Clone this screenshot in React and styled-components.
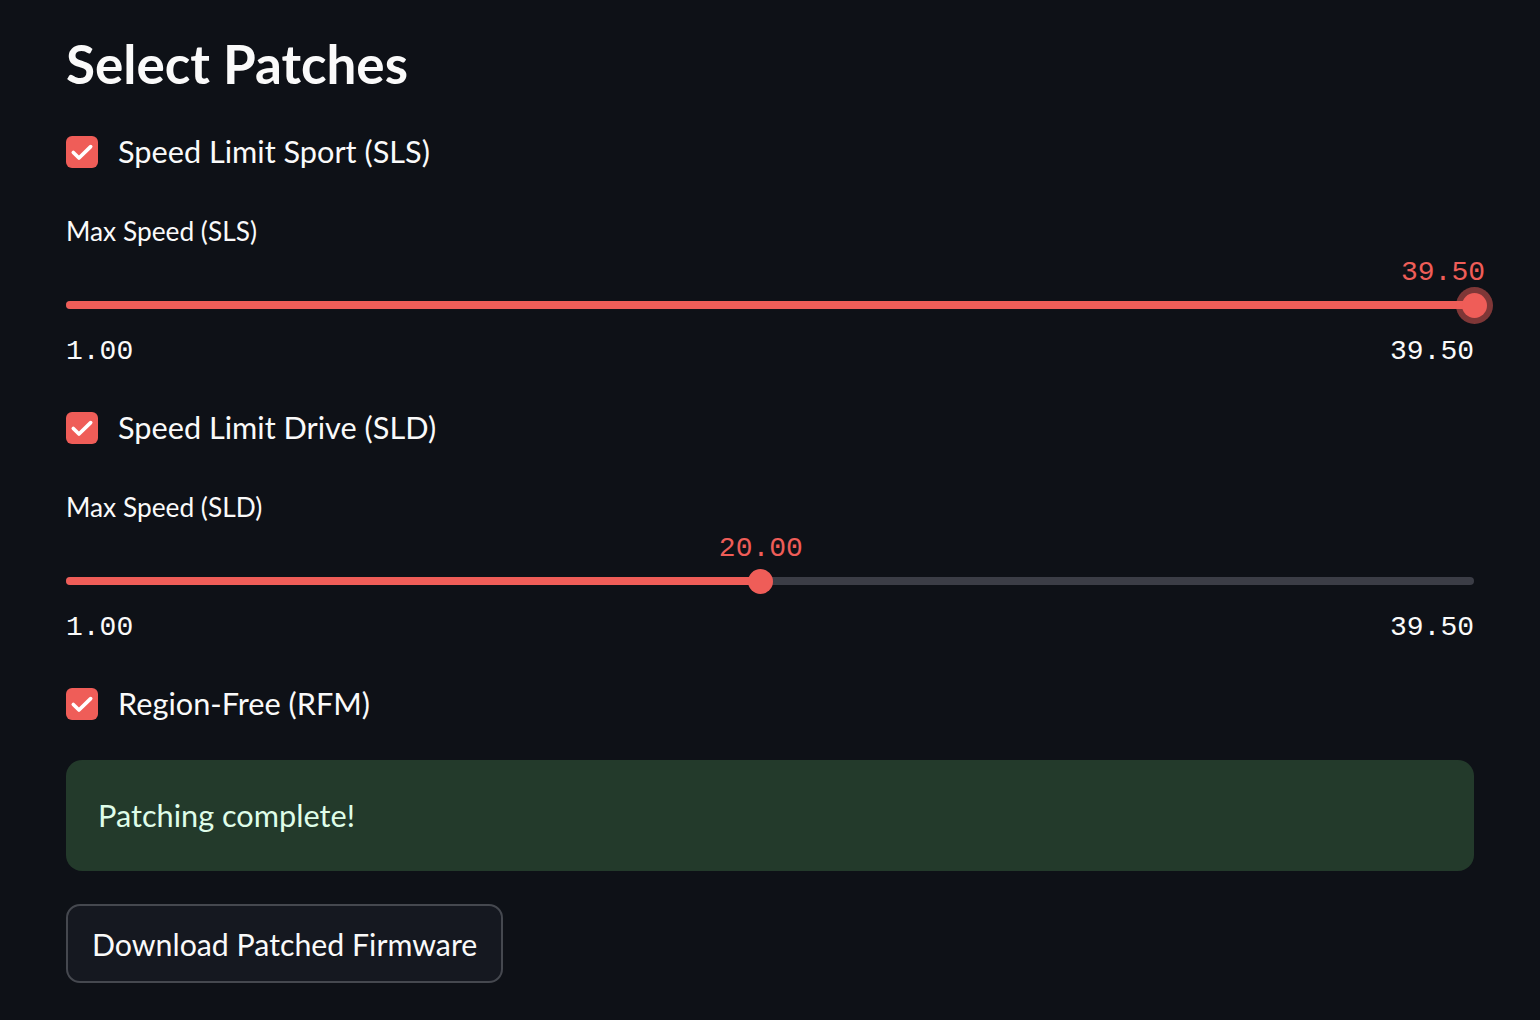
import React from 'react';
import styled, { createGlobalStyle } from 'styled-components';

const primary = '#ef5d58';
const text = '#fafafa';

const GlobalStyle = createGlobalStyle`
  html, body {
    margin: 0;
    padding: 0;
    background: #0e1117;
  }
  body {
    font-family: Lato, "Noto Sans", sans-serif;
    color: ${text};
  }
`;

const Page = styled.main`
  width: 1408px;
  padding: 30px 0 37px 66px;
  display: flex;
  flex-direction: column;
`;

const Heading = styled.h2`
  margin: 0;
  height: 67px;
  line-height: 67px;
  font-size: 53px;
  font-weight: 700;
  color: ${text};
`;

const CheckRow = styled.label`
  display: flex;
  align-items: center;
  gap: 20px;
  height: 40px;
  margin-top: ${({ $gap }) => $gap}px;
  font-size: 30.7px;
  line-height: 38px;
  color: ${text};
`;

const Box = styled.span`
  width: 32px;
  height: 32px;
  border-radius: 6px;
  background: ${primary};
  display: flex;
  align-items: center;
  justify-content: center;
`;

const SliderWrap = styled.div`
  margin-top: 41px;
  display: flex;
  flex-direction: column;
`;

const SliderLabel = styled.div`
  height: 36px;
  line-height: 36px;
  font-size: 26.3px;
  color: ${text};
`;

const TrackArea = styled.div`
  margin-top: 36px;
  height: 40px;
  position: relative;
  display: flex;
  align-items: center;
`;

const Track = styled.div`
  position: relative;
  width: 100%;
  height: 8px;
  border-radius: 4px;
  background: #3b3d46;
`;

const Fill = styled.div`
  height: 100%;
  border-radius: 4px;
  background: ${primary};
`;

const Thumb = styled.div`
  position: absolute;
  top: 50%;
  width: 25px;
  height: 25px;
  margin: -12.5px 0 0 -12.5px;
  border-radius: 50%;
  background: ${primary};
  box-shadow: ${({ $focus }) => ($focus ? '0 0 0 6px rgba(239, 93, 88, 0.5)' : 'none')};
`;

const ValueLabel = styled.div`
  position: absolute;
  top: -43px;
  height: 30px;
  line-height: 30px;
  font-family: "Liberation Mono", "DejaVu Sans Mono", monospace;
  font-size: 28px;
  color: ${primary};
  white-space: nowrap;
`;

const Ticks = styled.div`
  margin-top: 9px;
  height: 36px;
  line-height: 36px;
  display: flex;
  justify-content: space-between;
  font-family: "Liberation Mono", "DejaVu Sans Mono", monospace;
  font-size: 28px;
  color: ${text};
`;

const Alert = styled.div`
  margin-top: 36px;
  height: 111px;
  box-sizing: border-box;
  padding: 0 32px;
  display: flex;
  align-items: center;
  border-radius: 16px;
  background: #233a2b;
  color: #dffde9;
  font-size: 30.7px;
`;

const Button = styled.button`
  margin-top: 33px;
  align-self: flex-start;
  height: 79px;
  padding: 0 24px;
  border: 2px solid #45484f;
  border-radius: 14px;
  background: #151820;
  color: ${text};
  font-family: Lato, "Noto Sans", sans-serif;
  font-size: 30.3px;
`;

const Check = ({ label, gap }) => (
  <CheckRow $gap={gap}>
    <Box>
      <svg width="26" height="26" viewBox="0 0 24 24" fill="none" stroke="#fff" strokeWidth="3.4" strokeLinecap="round" strokeLinejoin="round">
        <path d="M4 12.5l5.2 5L20 7" />
      </svg>
    </Box>
    {label}
  </CheckRow>
);

const Slider = ({ label, value, min, max, focus }) => {
  const pct = ((value - min) / (max - min)) * 100;
  const atEnd = pct > 97;
  return (
    <SliderWrap>
      <SliderLabel>{label}</SliderLabel>
      <TrackArea>
        <Track>
          <Fill style={{ width: `${pct}%` }} />
          <Thumb $focus={focus} style={{ left: `${pct}%` }} />
          <ValueLabel
            style={
              atEnd
                ? { right: '-11px' }
                : { left: `${pct}%`, transform: 'translateX(-50%)' }
            }
          >
            {value.toFixed(2)}
          </ValueLabel>
        </Track>
      </TrackArea>
      <Ticks>
        <span>{min.toFixed(2)}</span>
        <span>{max.toFixed(2)}</span>
      </Ticks>
    </SliderWrap>
  );
};

export default function App() {
  return (
    <>
      <GlobalStyle />
      <Page>
        <Heading>Select Patches</Heading>
        <Check label="Speed Limit Sport (SLS)" gap={35} />
        <Slider label="Max Speed (SLS)" value={39.5} min={1} max={39.5} focus />
        <Check label="Speed Limit Drive (SLD)" gap={38} />
        <Slider label="Max Speed (SLD)" value={20} min={1} max={39.5} />
        <Check label="Region-Free (RFM)" gap={38} />
        <Alert>Patching complete!</Alert>
        <Button>Download Patched Firmware</Button>
      </Page>
    </>
  );
}
